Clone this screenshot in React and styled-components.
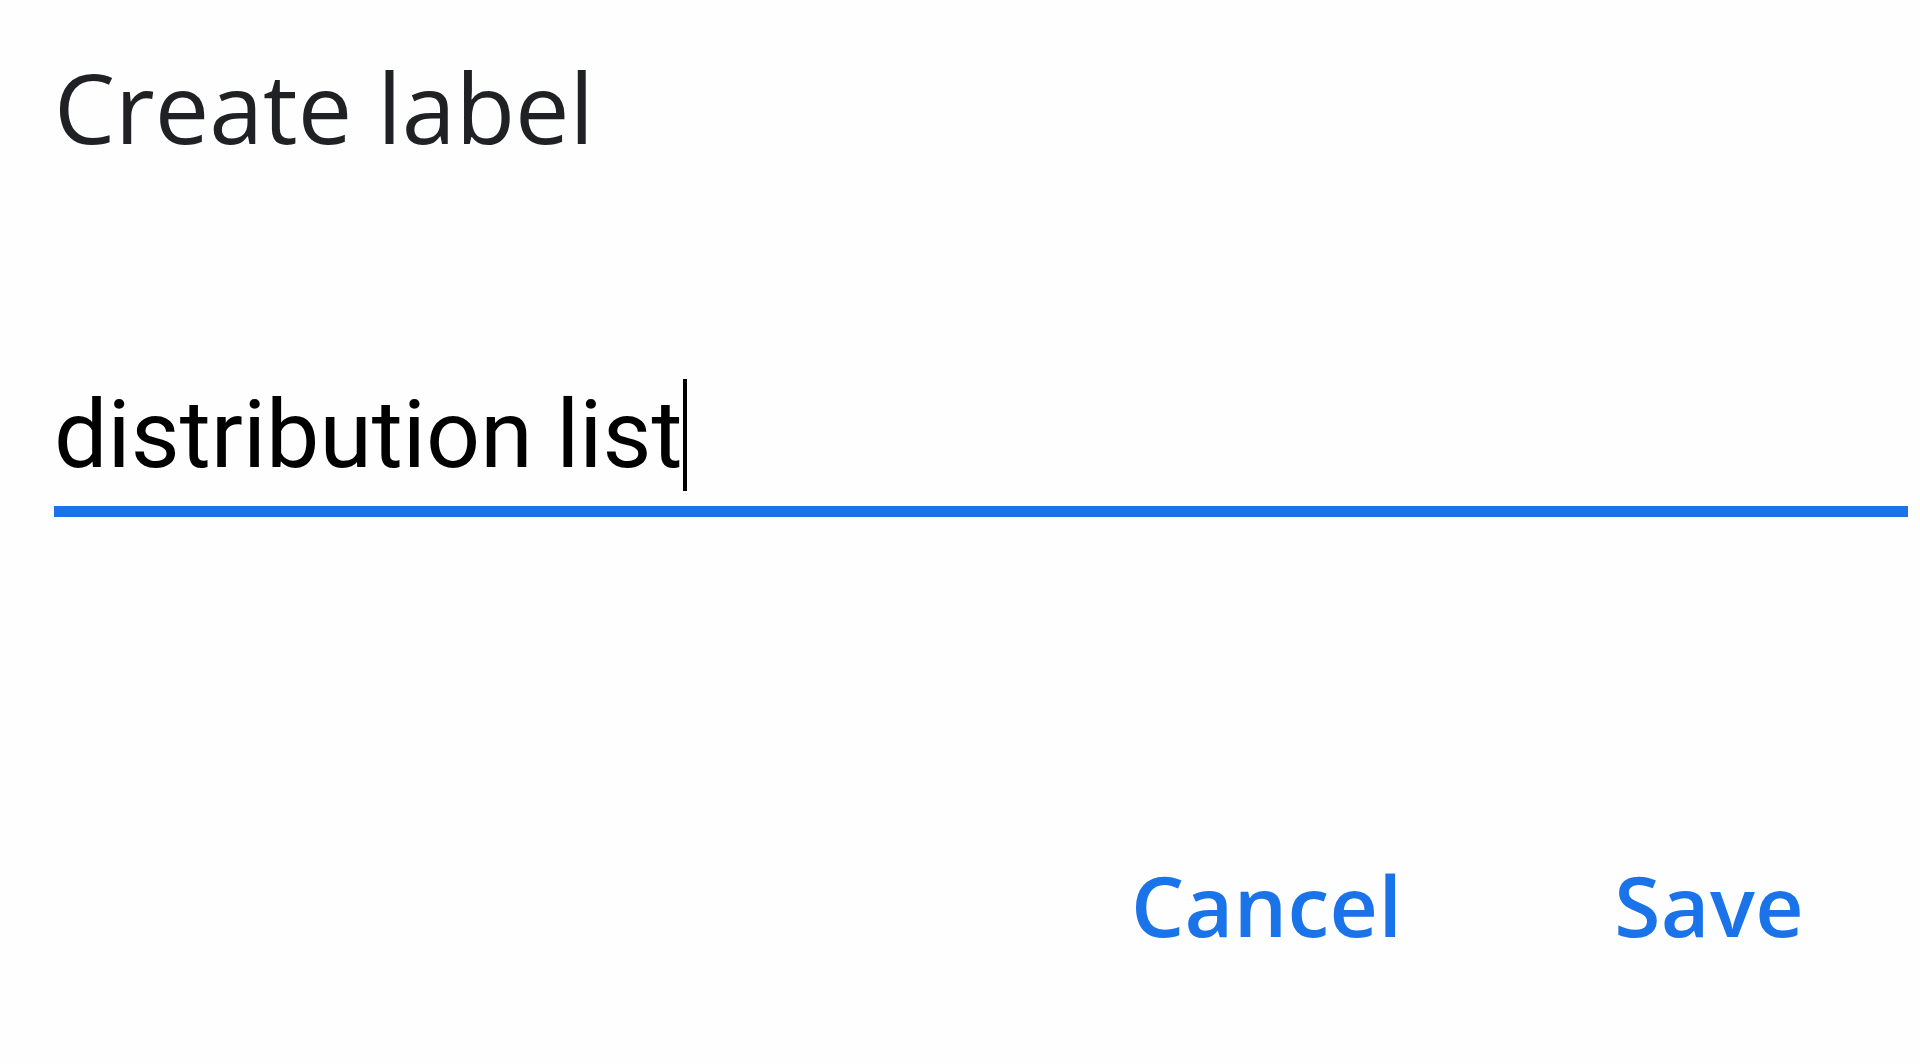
import React from "react";
import styled, { createGlobalStyle } from "styled-components";

const GlobalStyle = createGlobalStyle`
  html, body {
    margin: 0;
    padding: 0;
    background: #fefefe;
  }
  * { box-sizing: border-box; }
`;

const Dialog = styled.div`
  min-height: 100vh;
  display: flex;
  flex-direction: column;
  padding: 0 12px 0 54px;
  background: #fefefe;
`;

const Title = styled.h1`
  margin: 58px 0 0 0;
  font-family: "Open Sans", sans-serif;
  font-weight: 400;
  font-size: 97px;
  line-height: 1;
  letter-spacing: 0;
  color: #202124;
`;

const Field = styled.div`
  margin-top: 224px;
  display: flex;
  flex-direction: column;
`;

const Value = styled.div`
  font-family: Roboto, sans-serif;
  font-size: 95px;
  line-height: normal;
  color: #000;
  white-space: nowrap;
`;

const Caret = styled.span`
  display: inline-block;
  width: 4px;
  height: 112px;
  margin-left: 0px;
  background: #000;
  vertical-align: top;
`;

const Underline = styled.div`
  margin-top: 15px;
  height: 11px;
  background: #1a73e8;
`;

const Actions = styled.div`
  margin-top: 346px;
  display: flex;
  justify-content: flex-end;
  gap: 212px;
  padding-right: 104px;
`;

const TextButton = styled.button`
  border: none;
  background: transparent;
  padding: 0;
  font-family: "Open Sans", sans-serif;
  font-weight: 600;
  font-size: 84px;
  line-height: 1;
  letter-spacing: 0.4px;
  color: #1a73e8;
  cursor: pointer;
`;

export default function App() {
  return (
    <>
      <GlobalStyle />
      <Dialog>
        <Title>Create label</Title>
        <Field>
          <Value>
            distribution list
            <Caret />
          </Value>
          <Underline />
        </Field>
        <Actions>
          <TextButton>Cancel</TextButton>
          <TextButton>Save</TextButton>
        </Actions>
      </Dialog>
    </>
  );
}
